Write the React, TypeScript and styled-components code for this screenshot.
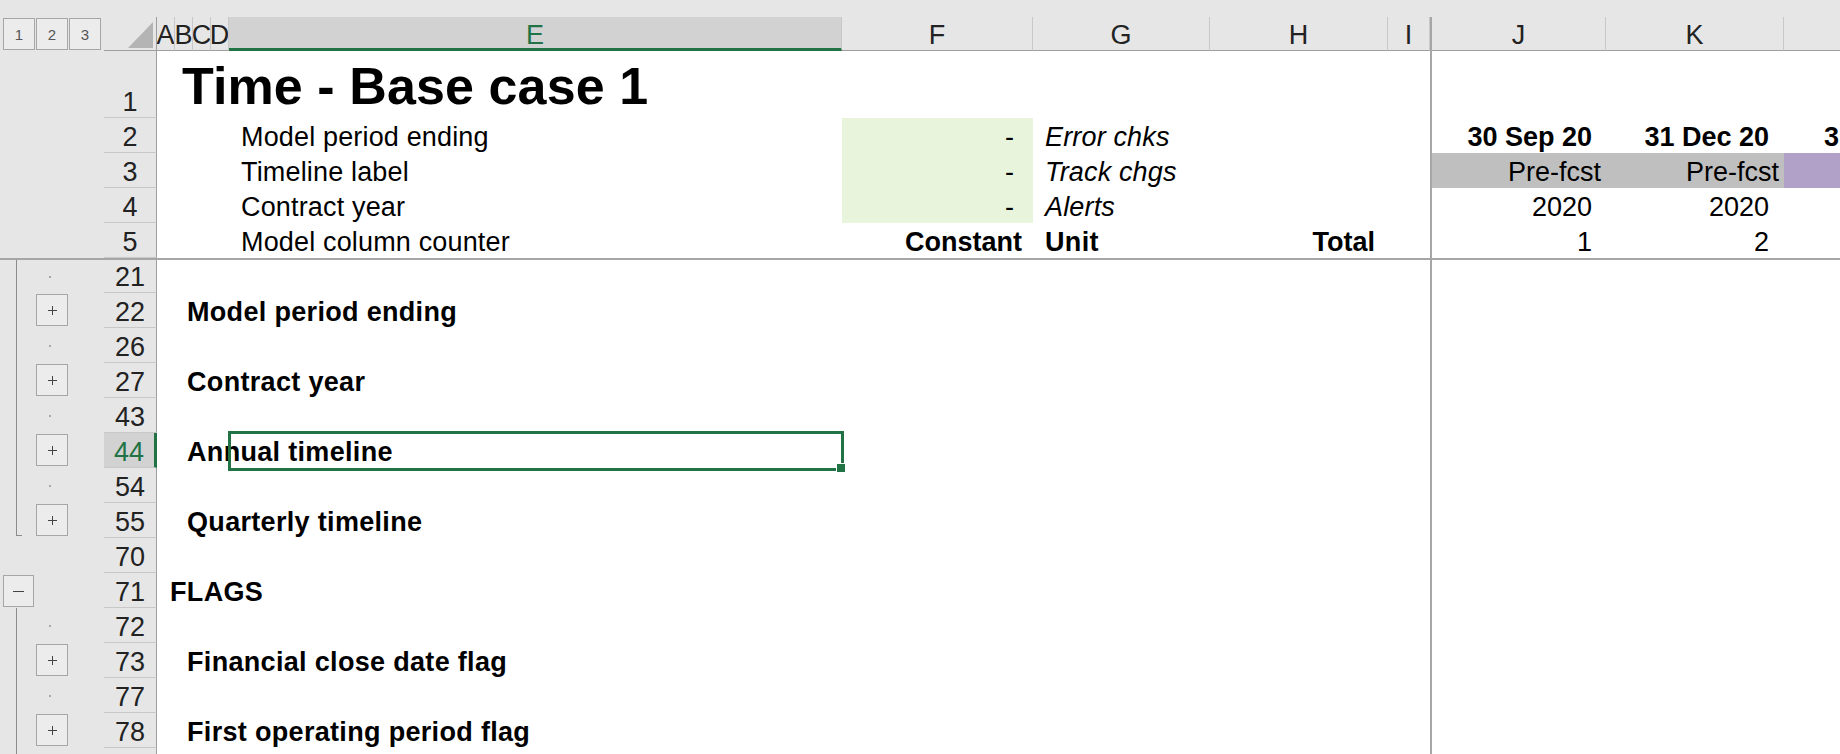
import React from 'react';
import styled, { createGlobalStyle } from 'styled-components';

const FONT = '"Liberation Sans", Arial, sans-serif';
const GREEN = '#217346';
const HEAD_BG = '#e6e6e6';
const HEAD_ACTIVE = '#d2d2d2';
const HEAD_LINE = '#c8c8c8';
const HEAD_EDGE = '#9e9e9e';
const FREEZE = '#a6a6a6';
const OUTLINE = '#8c8c8c';
const INPUT_GREEN = '#e8f4dc';
const PRE_GRAY = '#bfbfbf';
const PURPLE = '#b1a0c7';

// outline | row header | A B C D | E | F | G | H | I | freeze | J | K | L
const COLS = [104, 53, 18, 18, 18, 18, 613, 191, 177, 178, 42, 2, 174, 178, 178]
  .map((w) => `${w}px`)
  .join(' ');

const GlobalStyle = createGlobalStyle`
  html, body { margin: 0; padding: 0; background: ${HEAD_BG}; overflow: hidden; }
  body { font-family: ${FONT}; }
`;

const Sheet = styled.div`
  width: 1840px;
  height: 754px;
  overflow: hidden;
  display: flex;
  flex-direction: column;
  background: ${HEAD_BG};
  font-family: ${FONT};
  color: #000;
`;

const TopStrip = styled.div`
  flex: none;
  height: 17px;
`;

const Band = styled.div<{ $h: number; $head?: boolean }>`
  flex: none;
  display: grid;
  grid-template-columns: ${COLS};
  grid-template-rows: ${(p) => p.$h}px;
  height: ${(p) => p.$h}px;
  background: ${(p) => (p.$head ? HEAD_BG : '#fff')};
`;

const FreezeLine = styled.div`
  flex: none;
  height: 2px;
  background: ${FREEZE};
`;

const FreezeBar = styled.div`
  grid-row: 1;
  grid-column: 12;
  background: ${FREEZE};
`;

const LevelBar = styled.div`
  grid-row: 1;
  grid-column: 1;
  display: flex;
  gap: 1px;
  padding: 1px 0 0 3px;
  align-items: flex-start;
`;

const LevelButton = styled.div`
  width: 32px;
  height: 32px;
  box-sizing: border-box;
  border: 1px solid #a6a6a6;
  background: #ececec;
  color: #555;
  font-size: 15px;
  display: flex;
  align-items: center;
  justify-content: center;
`;

const Corner = styled.div`
  grid-row: 1;
  grid-column: 2;
  box-sizing: border-box;
  border-right: 1px solid ${HEAD_EDGE};
  border-bottom: 1px solid ${HEAD_EDGE};
  display: flex;
  align-items: flex-end;
  justify-content: flex-end;
  padding: 0 3px 2px 0;
`;

const ColHead = styled.div<{ $col: number; $active?: boolean }>`
  grid-row: 1;
  grid-column: ${(p) => p.$col};
  box-sizing: border-box;
  overflow: hidden;
  display: flex;
  align-items: flex-end;
  justify-content: center;
  font-size: 27px;
  line-height: ${(p) => (p.$active ? 25 : 29)}px;
  color: ${(p) => (p.$active ? GREEN : '#222')};
  background: ${(p) => (p.$active ? HEAD_ACTIVE : HEAD_BG)};
  border-right: 1px solid ${HEAD_LINE};
  border-bottom: ${(p) => (p.$active ? `3px solid ${GREEN}` : `1px solid ${HEAD_EDGE}`)};
`;

const RowHead = styled.div<{ $active?: boolean }>`
  grid-row: 1;
  grid-column: 2;
  box-sizing: border-box;
  display: flex;
  align-items: flex-end;
  justify-content: center;
  font-size: 27px;
  line-height: 29px;
  color: ${(p) => (p.$active ? GREEN : '#222')};
  background: ${(p) => (p.$active ? HEAD_ACTIVE : HEAD_BG)};
  border-bottom: 1px solid ${HEAD_LINE};
  border-right: ${(p) => (p.$active ? `3px solid ${GREEN}` : `1px solid ${HEAD_EDGE}`)};
`;

const Outline = styled.div`
  grid-row: 1;
  grid-column: 1;
  display: grid;
  grid-template-columns: 34px 34px 1fr;
  background: ${HEAD_BG};
`;

const Lane = styled.div`
  display: flex;
  align-items: stretch;
  min-height: 0;
`;

const GroupLine = styled.div<{ $end?: boolean }>`
  margin-left: 16px;
  width: 6px;
  box-sizing: border-box;
  border-left: 1px solid ${OUTLINE};
  border-bottom: ${(p) => (p.$end ? `1px solid ${OUTLINE}` : 'none')};
  height: ${(p) => (p.$end ? '33px' : 'auto')};
  align-self: ${(p) => (p.$end ? 'flex-start' : 'stretch')};
`;

const Toggle = styled.div<{ $lane: 1 | 2 }>`
  margin: ${(p) => (p.$lane === 1 ? '2px 0 0 3px' : '1px 0 0 2px')};
  width: 32px;
  height: 32px;
  box-sizing: border-box;
  border: 1px solid #a6a6a6;
  background: #ececec;
  display: flex;
  align-items: center;
  justify-content: center;
  align-self: flex-start;
`;

const Dot = styled.span`
  width: 2px;
  height: 2px;
  background: #a8a8a8;
  margin-left: 15px;
  align-self: center;
`;

const Cell = styled.div<{
  $col: number;
  $span?: number;
  $bold?: boolean;
  $italic?: boolean;
  $right?: boolean;
  $fill?: string;
  $pl?: number;
  $pr?: number;
  $pb?: number;
  $size?: number;
}>`
  grid-row: 1;
  grid-column: ${(p) => p.$col} / span ${(p) => p.$span ?? 1};
  display: flex;
  align-items: flex-end;
  justify-content: ${(p) => (p.$right ? 'flex-end' : 'flex-start')};
  min-width: 0;
  padding: 0 ${(p) => p.$pr ?? 0}px ${(p) => p.$pb ?? 0}px ${(p) => p.$pl ?? 0}px;
  background: ${(p) => p.$fill ?? 'transparent'};
  font-size: ${(p) => p.$size ?? 27}px;
  font-weight: ${(p) => (p.$bold ? 700 : 400)};
  font-style: ${(p) => (p.$italic ? 'italic' : 'normal')};
  letter-spacing: ${(p) => (p.$right ? 0 : p.$size ? 0.1 : p.$bold ? 0.32 : 0.16)}px;
  white-space: nowrap;
  line-height: normal;
`;

const SelectedCell = styled.div`
  grid-row: 1;
  grid-column: 7;
  position: relative;
`;

const SelectionFrame = styled.div`
  position: absolute;
  left: -1px;
  top: -2px;
  right: -2px;
  bottom: -3px;
  border: 3px solid ${GREEN};
  box-sizing: border-box;
`;

const FillHandle = styled.div`
  position: absolute;
  right: -4px;
  bottom: -4px;
  width: 9px;
  height: 9px;
  box-sizing: border-box;
  background: ${GREEN};
  border-top: 1px solid #fff;
  border-left: 1px solid #fff;
`;

type CellSpec = {
  col: number;
  span?: number;
  text?: string;
  bold?: boolean;
  italic?: boolean;
  right?: boolean;
  fill?: string;
  pl?: number;
  pr?: number;
  pb?: number;
  size?: number;
};

type RowSpec = {
  num: string;
  h: number;
  lane1?: 'line' | 'end' | 'minus';
  lane2?: 'dot' | 'plus';
  active?: boolean;
  selected?: boolean;
  cells: CellSpec[];
};

const label = (col: number, text: string, extra: Partial<CellSpec> = {}): CellSpec => ({
  col,
  span: 8 - col,
  text,
  pl: 12,
  ...extra,
});

const topRows: RowSpec[] = [
  {
    num: '1',
    h: 67,
    cells: [{ col: 4, span: 8, text: 'Time - Base case 1', bold: true, size: 52, pl: 7, pb: 2 }],
  },
  {
    num: '2',
    h: 35,
    cells: [
      label(7, 'Model period ending'),
      { col: 8, text: '-', right: true, fill: INPUT_GREEN, pr: 19 },
      { col: 9, span: 2, text: 'Error chks', italic: true, pl: 12 },
      { col: 13, text: '30 Sep 20', bold: true, right: true, pr: 14 },
      { col: 14, text: '31 Dec 20', bold: true, right: true, pr: 15 },
      { col: 15, text: '31 Mar 21', bold: true, right: true, pr: 15 },
    ],
  },
  {
    num: '3',
    h: 35,
    cells: [
      label(7, 'Timeline label'),
      { col: 8, text: '-', right: true, fill: INPUT_GREEN, pr: 19 },
      { col: 9, span: 2, text: 'Track chgs', italic: true, pl: 12 },
      { col: 13, text: 'Pre-fcst', right: true, fill: PRE_GRAY, pr: 5 },
      { col: 14, text: 'Pre-fcst', right: true, fill: PRE_GRAY, pr: 5 },
      { col: 15, text: '', fill: PURPLE },
    ],
  },
  {
    num: '4',
    h: 35,
    cells: [
      label(7, 'Contract year'),
      { col: 8, text: '-', right: true, fill: INPUT_GREEN, pr: 19 },
      { col: 9, span: 2, text: 'Alerts', italic: true, pl: 12 },
      { col: 13, text: '2020', right: true, pr: 14 },
      { col: 14, text: '2020', right: true, pr: 15 },
    ],
  },
  {
    num: '5',
    h: 35,
    cells: [
      label(7, 'Model column counter'),
      { col: 8, text: 'Constant', bold: true, right: true, pr: 11 },
      { col: 9, text: 'Unit', bold: true, pl: 12 },
      { col: 10, text: 'Total', bold: true, right: true, pr: 13 },
      { col: 13, text: '1', right: true, pr: 14 },
      { col: 14, text: '2', right: true, pr: 15 },
    ],
  },
];

const bodyRows: RowSpec[] = [
  { num: '21', h: 33, lane1: 'line', lane2: 'dot', cells: [] },
  { num: '22', h: 35, lane1: 'line', lane2: 'plus', cells: [label(4, 'Model period ending', { bold: true })] },
  { num: '26', h: 35, lane1: 'line', lane2: 'dot', cells: [] },
  { num: '27', h: 35, lane1: 'line', lane2: 'plus', cells: [label(4, 'Contract year', { bold: true })] },
  { num: '43', h: 35, lane1: 'line', lane2: 'dot', cells: [] },
  {
    num: '44',
    h: 35,
    lane1: 'line',
    lane2: 'plus',
    active: true,
    selected: true,
    cells: [label(4, 'Annual timeline', { bold: true })],
  },
  { num: '54', h: 35, lane1: 'line', lane2: 'dot', cells: [] },
  { num: '55', h: 35, lane1: 'end', lane2: 'plus', cells: [label(4, 'Quarterly timeline', { bold: true })] },
  { num: '70', h: 35, cells: [] },
  { num: '71', h: 35, lane1: 'minus', cells: [label(3, 'FLAGS', { bold: true, pl: 13 })] },
  { num: '72', h: 35, lane1: 'line', lane2: 'dot', cells: [] },
  { num: '73', h: 35, lane1: 'line', lane2: 'plus', cells: [label(4, 'Financial close date flag', { bold: true })] },
  { num: '77', h: 35, lane1: 'line', lane2: 'dot', cells: [] },
  { num: '78', h: 35, lane1: 'line', lane2: 'plus', cells: [label(4, 'First operating period flag', { bold: true })] },
  { num: '', h: 35, lane1: 'line', cells: [] },
];

const PlusIcon = () => (
  <svg width="9" height="9" viewBox="0 0 9 9">
    <path d="M4.5 0v9M0 4.5h9" stroke="#444" strokeWidth="1" />
  </svg>
);

const MinusIcon = () => (
  <svg width="11" height="3" viewBox="0 0 11 3">
    <path d="M0 1.5h11" stroke="#444" strokeWidth="1" />
  </svg>
);

const CornerTriangle = () => (
  <svg width="25" height="26" viewBox="0 0 25 26">
    <polygon points="0,26 25,26 25,0" fill="#b4b4b4" />
  </svg>
);

const OutlineGutter: React.FC<{ row: RowSpec }> = ({ row }) => (
  <Outline>
    <Lane>
      {row.lane1 === 'line' && <GroupLine />}
      {row.lane1 === 'end' && <GroupLine $end />}
      {row.lane1 === 'minus' && (
        <Toggle $lane={1}>
          <MinusIcon />
        </Toggle>
      )}
    </Lane>
    <Lane>
      {row.lane2 === 'dot' && <Dot />}
      {row.lane2 === 'plus' && (
        <Toggle $lane={2}>
          <PlusIcon />
        </Toggle>
      )}
    </Lane>
    <Lane />
  </Outline>
);

const SheetRow: React.FC<{ row: RowSpec }> = ({ row }) => (
  <Band $h={row.h}>
    <OutlineGutter row={row} />
    <RowHead $active={row.active}>{row.num}</RowHead>
    {row.cells.map((c, i) => (
      <Cell
        key={i}
        $col={c.col}
        $span={c.span}
        $bold={c.bold}
        $italic={c.italic}
        $right={c.right}
        $fill={c.fill}
        $pl={c.pl}
        $pr={c.pr}
        $pb={c.pb}
        $size={c.size}
      >
        {c.text}
      </Cell>
    ))}
    {row.selected && (
      <SelectedCell>
        <SelectionFrame>
          <FillHandle />
        </SelectionFrame>
      </SelectedCell>
    )}
    <FreezeBar />
  </Band>
);

const columnLetters: { col: number; letter: string; active?: boolean }[] = [
  { col: 3, letter: 'A' },
  { col: 4, letter: 'B' },
  { col: 5, letter: 'C' },
  { col: 6, letter: 'D' },
  { col: 7, letter: 'E', active: true },
  { col: 8, letter: 'F' },
  { col: 9, letter: 'G' },
  { col: 10, letter: 'H' },
  { col: 11, letter: 'I' },
  { col: 13, letter: 'J' },
  { col: 14, letter: 'K' },
];

export default function App() {
  return (
    <>
      <GlobalStyle />
      <Sheet>
        <TopStrip />
        <Band $h={34} $head>
          <LevelBar>
            <LevelButton>1</LevelButton>
            <LevelButton>2</LevelButton>
            <LevelButton>3</LevelButton>
          </LevelBar>
          <Corner>
            <CornerTriangle />
          </Corner>
          {columnLetters.map((c) => (
            <ColHead key={c.letter} $col={c.col} $active={c.active}>
              {c.letter}
            </ColHead>
          ))}
          <ColHead $col={15} />
          <FreezeBar />
        </Band>
        {topRows.map((r) => (
          <SheetRow key={r.num} row={r} />
        ))}
        <FreezeLine />
        {bodyRows.map((r, i) => (
          <SheetRow key={`b${i}`} row={r} />
        ))}
      </Sheet>
    </>
  );
}
